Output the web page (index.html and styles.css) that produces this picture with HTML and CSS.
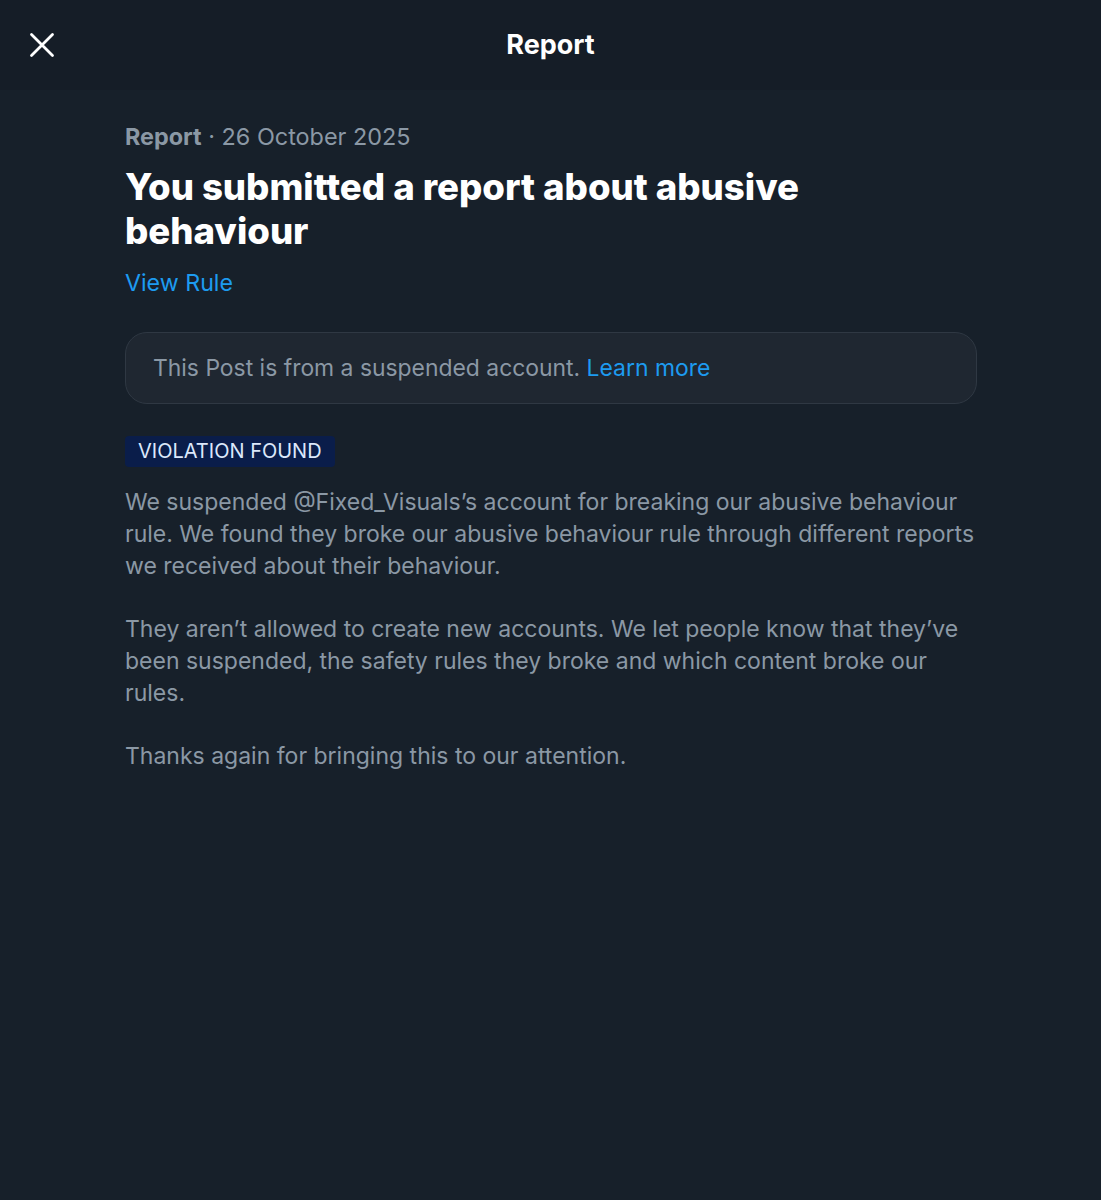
FILE: index.html
```html
<!DOCTYPE html>
<html lang="en">
<head>
    <meta charset="UTF-8">
    <meta name="viewport" content="width=device-width, initial-scale=1.0">
    <title>Report</title>
    <link rel="stylesheet" href="styles.css">
</head>
<body>
    <!-- Top bar -->
    <div class="topbar">
        <button class="close" aria-label="Close">
            <svg viewBox="0 0 24 24" width="28" height="28">
                <path d="M3 3 L21 21 M21 3 L3 21" stroke="#fff" stroke-width="2.4" stroke-linecap="round" fill="none"/>
            </svg>
        </button>
        <div class="topbar-title">Report</div>
    </div>

    <div class="content">
        <div class="meta"><span class="meta-label">Report</span> · 26 October 2025</div>
        <h1 class="headline">You submitted a report about abusive behaviour</h1>
        <a class="link rule-link" href="#">View Rule</a>

        <div class="notice">
            This Post is from a suspended account. <a class="link" href="#">Learn more</a>
        </div>

        <span class="badge">VIOLATION FOUND</span>

        <p class="body-text">We suspended @Fixed_Visuals’s account for breaking our abusive behaviour rule. We found they broke our abusive behaviour rule through different reports we received about their behaviour.</p>
        <p class="body-text">They aren’t allowed to create new accounts. We let people know that they’ve been suspended, the safety rules they broke and which content broke our rules.</p>
        <p class="body-text">Thanks again for bringing this to our attention.</p>
    </div>
</body>
</html>
```

FILE: styles.css
```css
/* Base styles */
body {
    margin: 0;
    background: #17202a;
    color: #8b98a5;
    font-family: Inter, "Noto Sans", sans-serif;
    min-height: 100vh;
}

.topbar {
    height: 90px;
    background: #151d27;
    display: flex;
    align-items: center;
    justify-content: center;
    position: relative;
}

.close {
    position: absolute;
    left: 28px;
    top: 31px;
    background: none;
    border: none;
    padding: 0;
    cursor: pointer;
}

.topbar-title {
    color: #fff;
    font-size: 27px;
    font-weight: 700;
    margin-top: -2px;
}

.content {
    padding: 31px 124px 0 125px;
}

.meta {
    font-size: 23.4px;
    line-height: 32px;
}

.meta-label {
    font-weight: 700;
}

.headline {
    margin: 12px 0 14px;
    color: #fff;
    font-size: 36.6px;
    line-height: 44px;
    font-weight: 800;
    max-width: 760px;
}

.link {
    color: #1d9bf0;
    text-decoration: none;
}

.rule-link {
    font-size: 23.2px;
    line-height: 32px;
}

.notice {
    margin-top: 33px;
    background: #1f2731;
    border: 1px solid #2f3843;
    border-radius: 22px;
    padding: 18px 27px;
    font-size: 22.9px;
    line-height: 34px;
}

.badge {
    display: inline-block;
    margin-top: 32px;
    background: #0a1d4a;
    color: #dce8fb;
    font-size: 20px;
    line-height: 31px;
    padding: 0 13px;
    border-radius: 4px;
}

.body-text {
    font-size: 23px;
    line-height: 32px;
    margin: 0;
}

.badge + .body-text {
    margin-top: 19px;
}

.body-text + .body-text {
    margin-top: 31px;
}
```
